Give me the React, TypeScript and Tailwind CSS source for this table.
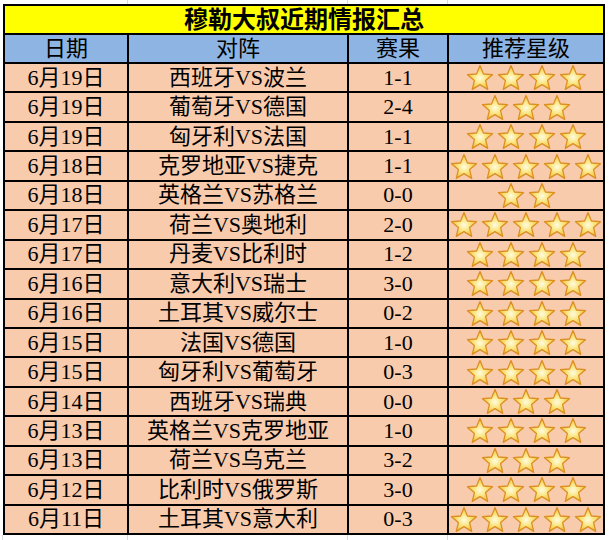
import React from 'react';

type Row = { date: string; match: string; score: string; stars: number };

const rows: Row[] = [
  { date: '6月19日', match: '西班牙VS波兰', score: '1-1', stars: 4 },
  { date: '6月19日', match: '葡萄牙VS德国', score: '2-4', stars: 3 },
  { date: '6月19日', match: '匈牙利VS法国', score: '1-1', stars: 4 },
  { date: '6月18日', match: '克罗地亚VS捷克', score: '1-1', stars: 5 },
  { date: '6月18日', match: '英格兰VS苏格兰', score: '0-0', stars: 2 },
  { date: '6月17日', match: '荷兰VS奥地利', score: '2-0', stars: 5 },
  { date: '6月17日', match: '丹麦VS比利时', score: '1-2', stars: 4 },
  { date: '6月16日', match: '意大利VS瑞士', score: '3-0', stars: 4 },
  { date: '6月16日', match: '土耳其VS威尔士', score: '0-2', stars: 4 },
  { date: '6月15日', match: '法国VS德国', score: '1-0', stars: 4 },
  { date: '6月15日', match: '匈牙利VS葡萄牙', score: '0-3', stars: 4 },
  { date: '6月14日', match: '西班牙VS瑞典', score: '0-0', stars: 3 },
  { date: '6月13日', match: '英格兰VS克罗地亚', score: '1-0', stars: 4 },
  { date: '6月13日', match: '荷兰VS乌克兰', score: '3-2', stars: 3 },
  { date: '6月12日', match: '比利时VS俄罗斯', score: '3-0', stars: 4 },
  { date: '6月11日', match: '土耳其VS意大利', score: '0-3', stars: 5 },
];

function Star() {
  return (
    <svg viewBox="0 0 100 95" className="w-[28px] h-[27px] shrink-0">
      <polygon
        points="50,5 62.3,35 94.7,37.5 70,58.5 77.6,90 50,73 22.4,90 30,58.5 5.3,37.5 37.7,35"
        fill="url(#starFill)"
        stroke="#dc8e22"
        strokeWidth="4.5"
        strokeLinejoin="round"
      />
    </svg>
  );
}

const font = { fontFamily: '"Liberation Serif", "Noto Sans CJK SC", serif' };

export default function App() {
  return (
    <div className="w-[609px] h-[540px] bg-white overflow-hidden" style={font}>
      <svg width="0" height="0" className="absolute">
        <defs>
          <radialGradient id="starFill" cx="50%" cy="52%" r="52%">
            <stop offset="0%" stopColor="#fffbe2" />
            <stop offset="40%" stopColor="#fbe98e" />
            <stop offset="100%" stopColor="#efc033" />
          </radialGradient>
        </defs>
      </svg>

      {/* faint sheet gridlines above the table */}
      <div className="flex h-[4px]">
        <div className="w-[128px] border-r border-[#d9d9d9]" />
        <div className="w-[220px] border-r border-[#d9d9d9]" />
        <div className="w-[100px] border-r border-[#d9d9d9]" />
      </div>

      <div className="ml-[3px] w-[602px] h-[531px] bg-black p-[2px] grid grid-cols-[122px_218px_98px_154px] grid-rows-[27px_27px_repeat(16,minmax(0,1fr))] gap-[2px] text-[22px] leading-none text-black">
        <div className="col-span-4 bg-[#ffff00] flex items-center justify-center font-bold text-[24px]">
          穆勒大叔近期情报汇总
        </div>
        {['日期', '对阵', '赛果', '推荐星级'].map((h) => (
          <div key={h} className="bg-[#8db4e2] flex items-center justify-center">
            {h}
          </div>
        ))}
        {rows.map((r, i) => (
          <React.Fragment key={i}>
            <div className="bg-[#f8cbad] flex items-center justify-center">{r.date}</div>
            <div className="bg-[#f8cbad] flex items-center justify-center">{r.match}</div>
            <div className="bg-[#f8cbad] flex items-center justify-center">{r.score}</div>
            <div className="bg-[#f8cbad] flex items-center justify-center gap-[3px] overflow-visible">
              {Array.from({ length: r.stars }).map((_, k) => (
                <Star key={k} />
              ))}
            </div>
          </React.Fragment>
        ))}
      </div>

      {/* faint sheet gridlines below the table */}
      <div className="flex h-[5px]">
        <div className="w-[3px] border-r border-[#d9d9d9]" />
        <div className="w-[125px] border-r border-[#d9d9d9]" />
        <div className="w-[220px] border-r border-[#d9d9d9]" />
        <div className="w-[100px] border-r border-[#d9d9d9]" />
      </div>
    </div>
  );
}
